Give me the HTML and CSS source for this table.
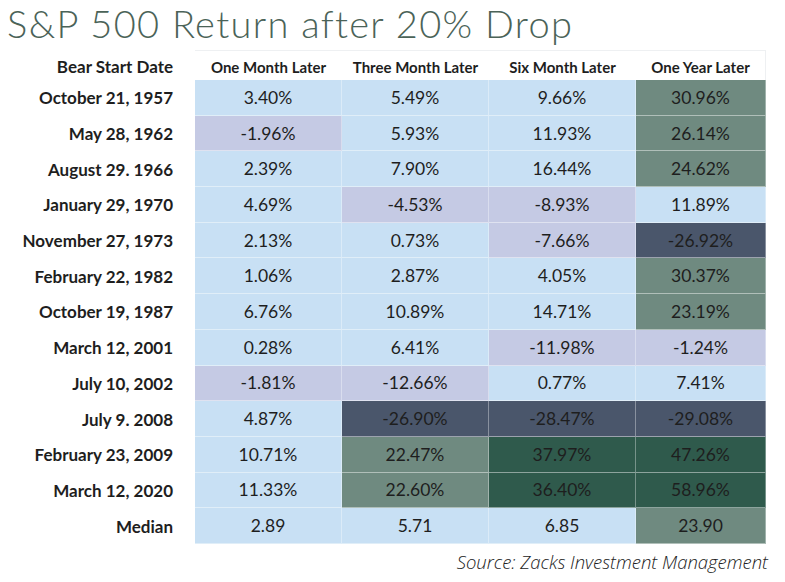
FILE: index.html
```html
<!DOCTYPE html>
<html>
<head>
<meta charset="utf-8">
<link rel="stylesheet" href="styles.css">
</head>
<body>
<div class="page">
  <h1 class="title">S&amp;P 500 Return after 20% Drop</h1>
  <div class="table">
    <div class="hd lab">Bear Start Date</div>
    <div class="hd">One Month Later</div>
    <div class="hd">Three Month Later</div>
    <div class="hd">Six Month Later</div>
    <div class="hd last">One Year Later</div>

    <div class="lab">October 21, 1957</div><div class="c lb">3.40%</div><div class="c lb">5.49%</div><div class="c lb">9.66%</div><div class="c g">30.96%</div>
    <div class="lab">May 28, 1962</div><div class="c lv">-1.96%</div><div class="c lb">5.93%</div><div class="c lb">11.93%</div><div class="c g">26.14%</div>
    <div class="lab">August 29. 1966</div><div class="c lb">2.39%</div><div class="c lb">7.90%</div><div class="c lb">16.44%</div><div class="c g">24.62%</div>
    <div class="lab">January 29, 1970</div><div class="c lb">4.69%</div><div class="c lv">-4.53%</div><div class="c lv">-8.93%</div><div class="c lb">11.89%</div>
    <div class="lab">November 27, 1973</div><div class="c lb">2.13%</div><div class="c lb">0.73%</div><div class="c lv">-7.66%</div><div class="c n">-26.92%</div>
    <div class="lab">February 22, 1982</div><div class="c lb">1.06%</div><div class="c lb">2.87%</div><div class="c lb">4.05%</div><div class="c g">30.37%</div>
    <div class="lab">October 19, 1987</div><div class="c lb">6.76%</div><div class="c lb">10.89%</div><div class="c lb">14.71%</div><div class="c g">23.19%</div>
    <div class="lab">March 12, 2001</div><div class="c lb">0.28%</div><div class="c lb">6.41%</div><div class="c lv">-11.98%</div><div class="c lv">-1.24%</div>
    <div class="lab">July 10, 2002</div><div class="c lv">-1.81%</div><div class="c lv">-12.66%</div><div class="c lb">0.77%</div><div class="c lb">7.41%</div>
    <div class="lab">July 9. 2008</div><div class="c lb">4.87%</div><div class="c n">-26.90%</div><div class="c n">-28.47%</div><div class="c n">-29.08%</div>
    <div class="lab">February 23, 2009</div><div class="c lb">10.71%</div><div class="c g">22.47%</div><div class="c d">37.97%</div><div class="c d">47.26%</div>
    <div class="lab">March 12, 2020</div><div class="c lb">11.33%</div><div class="c g">22.60%</div><div class="c d">36.40%</div><div class="c d">58.96%</div>
    <div class="lab">Median</div><div class="c lb">2.89</div><div class="c lb">5.71</div><div class="c lb">6.85</div><div class="c g">23.90</div>
  </div>
  <div class="source">Source: Zacks Investment Management</div>
</div>
</body>
</html>
```
FILE: styles.css
```css
html, body {
  margin: 0;
  padding: 0;
  background: #ffffff;
}
.page {
  width: 785px;
  height: 582px;
  position: relative;
  overflow: hidden;
}
.title {
  margin: 0;
  padding: 0 0 0 7px;
  height: 50px;
  box-sizing: border-box;
  font-family: "Lato", sans-serif;
  font-weight: 300;
  font-size: 38px;
  line-height: normal;
  color: #4b6358;
  letter-spacing: 1.3px;
  white-space: nowrap;
}
.table {
  display: grid;
  grid-template-columns: 195px 147px 147px 147px 130px;
  grid-template-rows: 30px repeat(13, 35.7px);
  font-family: "Lato", sans-serif;
  color: #1e1e1e;
}
.table > div {
  display: flex;
  align-items: center;
  justify-content: center;
  box-sizing: border-box;
}
.hd {
  font-weight: 700;
  font-size: 15px;
  padding-top: 2px;
  border-top: 1px solid #eef0f2;
}
.hd.last {
  border-right: 1px solid #eef0f2;
}
.hd.lab {
  border-top: none;
  justify-content: flex-start;
  padding-left: 48px;
}
.lab {
  justify-content: flex-end !important;
  padding-right: 22px;
  font-weight: 700;
  font-size: 17px;
}
.c {
  font-size: 17.5px;
  border-right: 1px solid rgba(255,255,255,0.35);
  border-bottom: 1px solid rgba(255,255,255,0.45);
}
.lb { background: #c8e0f4; }
.lv { background: #c5cae4; }
.g  { background: #6f8a80; }
.n  { background: #4a566b; }
.d  { background: #2f5a4c; }
.source {
  position: absolute;
  right: 17px;
  top: 549px;
  font-family: "Open Sans", sans-serif;
  font-style: italic;
  font-weight: 300;
  font-size: 18.5px;
  color: #222;
  white-space: nowrap;
}
```
